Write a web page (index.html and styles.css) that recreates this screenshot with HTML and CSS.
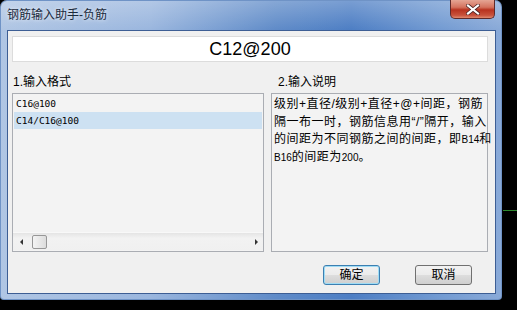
FILE: index.html
```html
<!DOCTYPE html>
<html>
<head>
<meta charset="utf-8">
<link rel="stylesheet" href="styles.css">
</head>
<body>
<div class="desk">
  <div class="win">
    <div class="titlebar">
      <span class="title">钢筋输入助手-负筋</span>
      <div class="close">
        <svg width="14" height="11" viewBox="0 0 14 11"><path d="M2 1.5 L12 9.5 M12 1.5 L2 9.5" stroke="#4a2020" stroke-width="3.6" stroke-linecap="square"/><path d="M2 1.5 L12 9.5 M12 1.5 L2 9.5" stroke="#ffffff" stroke-width="2.2" stroke-linecap="square"/></svg>
      </div>
    </div>
    <div class="client">
      <div class="input">C12@200</div>
      <div class="cols">
        <div class="col col-left">
          <div class="lbl">1.输入格式</div>
          <div class="box list">
            <div class="items">
              <div class="item">C16@100</div>
              <div class="item sel">C14/C16@100</div>
            </div>
            <div class="hscroll">
              <span class="arr arr-l"></span>
              <span class="thumb"></span>
              <span class="track"></span>
              <span class="arr arr-r"></span>
            </div>
          </div>
        </div>
        <div class="col col-right">
          <div class="lbl lbl-r">2.输入说明</div>
          <div class="box desc">
            <div class="ln">级别+直径/级别+直径+@+间距，钢筋</div>
            <div class="ln">隔一布一时，钢筋信息用“/”隔开，输入</div>
            <div class="ln">的间距为不同钢筋之间的间距，即<span class="sm">B14</span>和</div>
            <div class="ln"><span class="sm">B16</span>的间距为<span class="sm">200</span>。</div>
          </div>
        </div>
      </div>
      <div class="btns">
        <div class="btn btn-def">确定</div>
        <div class="btn">取消</div>
      </div>
    </div>
  </div>
  <div class="side"><div class="gline"></div></div>
</div>
</body>
</html>
```
FILE: styles.css
```css
html, body {
  margin: 0;
  padding: 0;
  background: #000;
  width: 517px;
  height: 310px;
  overflow: hidden;
}
.desk {
  display: flex;
  align-items: flex-start;
  font-family: "Liberation Sans", "Noto Sans CJK SC", sans-serif;
  font-size: 12px;
  color: #000;
}
.win {
  width: 502px;
  height: 300px;
  box-sizing: border-box;
  padding: 0 6px 6px 7px;
  border-radius: 7px 7px 4px 4px;
  background:
    linear-gradient(to bottom, rgba(255,255,255,0.25) 0px, rgba(255,255,255,0) 30px),
    linear-gradient(to right, #b0c6e4 0%, #9ab6de 30%, #5f8bc8 55%, #4d7ec4 70%, #739bd2 88%, #8aaad8 100%);
  box-shadow: inset 0 0 0 1px #6f93c6;
  display: flex;
  flex-direction: column;
}
.titlebar {
  height: 30px;
  display: flex;
  align-items: flex-start;
  justify-content: space-between;
  flex-shrink: 0;
}
.title {
  margin-top: 8px;
  font-size: 12px;
  line-height: 14px;
  color: #1b2a3c;
  text-shadow: 0 0 4px rgba(255,255,255,0.9);
}
.close {
  width: 45px;
  height: 19px;
  margin-right: 1px;
  box-sizing: border-box;
  border: 1px solid #5e2a2a;
  border-top: none;
  border-radius: 0 0 5px 5px;
  background: linear-gradient(to bottom, #e5a594 0%, #d4725e 40%, #b8321f 55%, #c8523c 85%, #e08a70 100%);
  display: flex;
  align-items: center;
  justify-content: center;
}
.client {
  flex: 1;
  background: #f0f0f0;
  border: 1px solid #3d5e94;
  display: flex;
  flex-direction: column;
  padding: 5px 7px 0 4px;
}
.input {
  height: 26px;
  box-sizing: border-box;
  background: #fff;
  border: 1px solid #dcdcdc;
  text-align: center;
  font-family: "Liberation Sans", sans-serif;
  font-size: 18px;
  line-height: 24px;
  color: #000;
}
.cols {
  display: flex;
  gap: 7px;
  margin-top: 12px;
}
.col-left { width: 252px; }
.col-right { width: 217px; }
.lbl {
  height: 16px;
  line-height: 16px;
  margin-bottom: 3px;
  padding-left: 1px;
  font-size: 12px;
}
.lbl-r { padding-left: 7px; }
.box {
  height: 159px;
  box-sizing: border-box;
  border: 1px solid #aaadb3;
  background: #f3f3f3;
}
.list {
  display: flex;
  flex-direction: column;
}
.items {
  flex: 1;
  padding: 1px 1px 0 1px;
}
.item {
  height: 17px;
  line-height: 17px;
  padding-left: 2px;
  font-family: "DejaVu Sans Mono", monospace;
  font-size: 9.5px;
  color: #000;
}
.item.sel {
  background: #cde1f2;
}
.hscroll {
  height: 17px;
  display: flex;
  align-items: center;
  background: linear-gradient(to bottom, #e4e4e4, #f2f2f2 30%, #f0f0f0);
  border-top: 1px solid #f8f8f8;
  margin-bottom: 1px;
  padding: 0 5px 0 7px;
}
.arr {
  width: 0;
  height: 0;
  border-top: 3px solid transparent;
  border-bottom: 3px solid transparent;
}
.arr-l { border-right: 3px solid #333; }
.arr-r { border-left: 3px solid #333; }
.thumb {
  width: 15px;
  height: 14px;
  box-sizing: border-box;
  margin-left: 9px;
  border: 1px solid #979797;
  border-radius: 2px;
  background: linear-gradient(to right, #f4f4f4, #dcdcdc);
}
.track { flex: 1; }
.desc {
  padding: 2px 1px 0 2px;
  font-size: 12px;
  letter-spacing: 0.5px;
  color: #000;
}
.ln {
  height: 17.5px;
  line-height: 17.5px;
  white-space: nowrap;
}
.sm {
  font-size: 10px;
  letter-spacing: 0;
}
.btns {
  display: flex;
  justify-content: flex-end;
  gap: 35px;
  margin-top: 13px;
  padding-right: 16px;
}
.btn {
  width: 57px;
  height: 20px;
  box-sizing: border-box;
  border: 1px solid #707070;
  border-radius: 3px;
  background: linear-gradient(to bottom, #f2f2f2 0%, #ebebeb 50%, #dddddd 51%, #cfcfcf 100%);
  text-align: center;
  line-height: 18px;
  font-size: 12px;
}
.btn-def {
  border-color: #3c7fb1;
  box-shadow: inset 0 0 0 1px #9fdcf5;
}
.side {
  flex: 1;
  padding-top: 210px;
}
.gline {
  height: 1px;
  margin-left: 1px;
  background: #2f8a2f;
}
```
